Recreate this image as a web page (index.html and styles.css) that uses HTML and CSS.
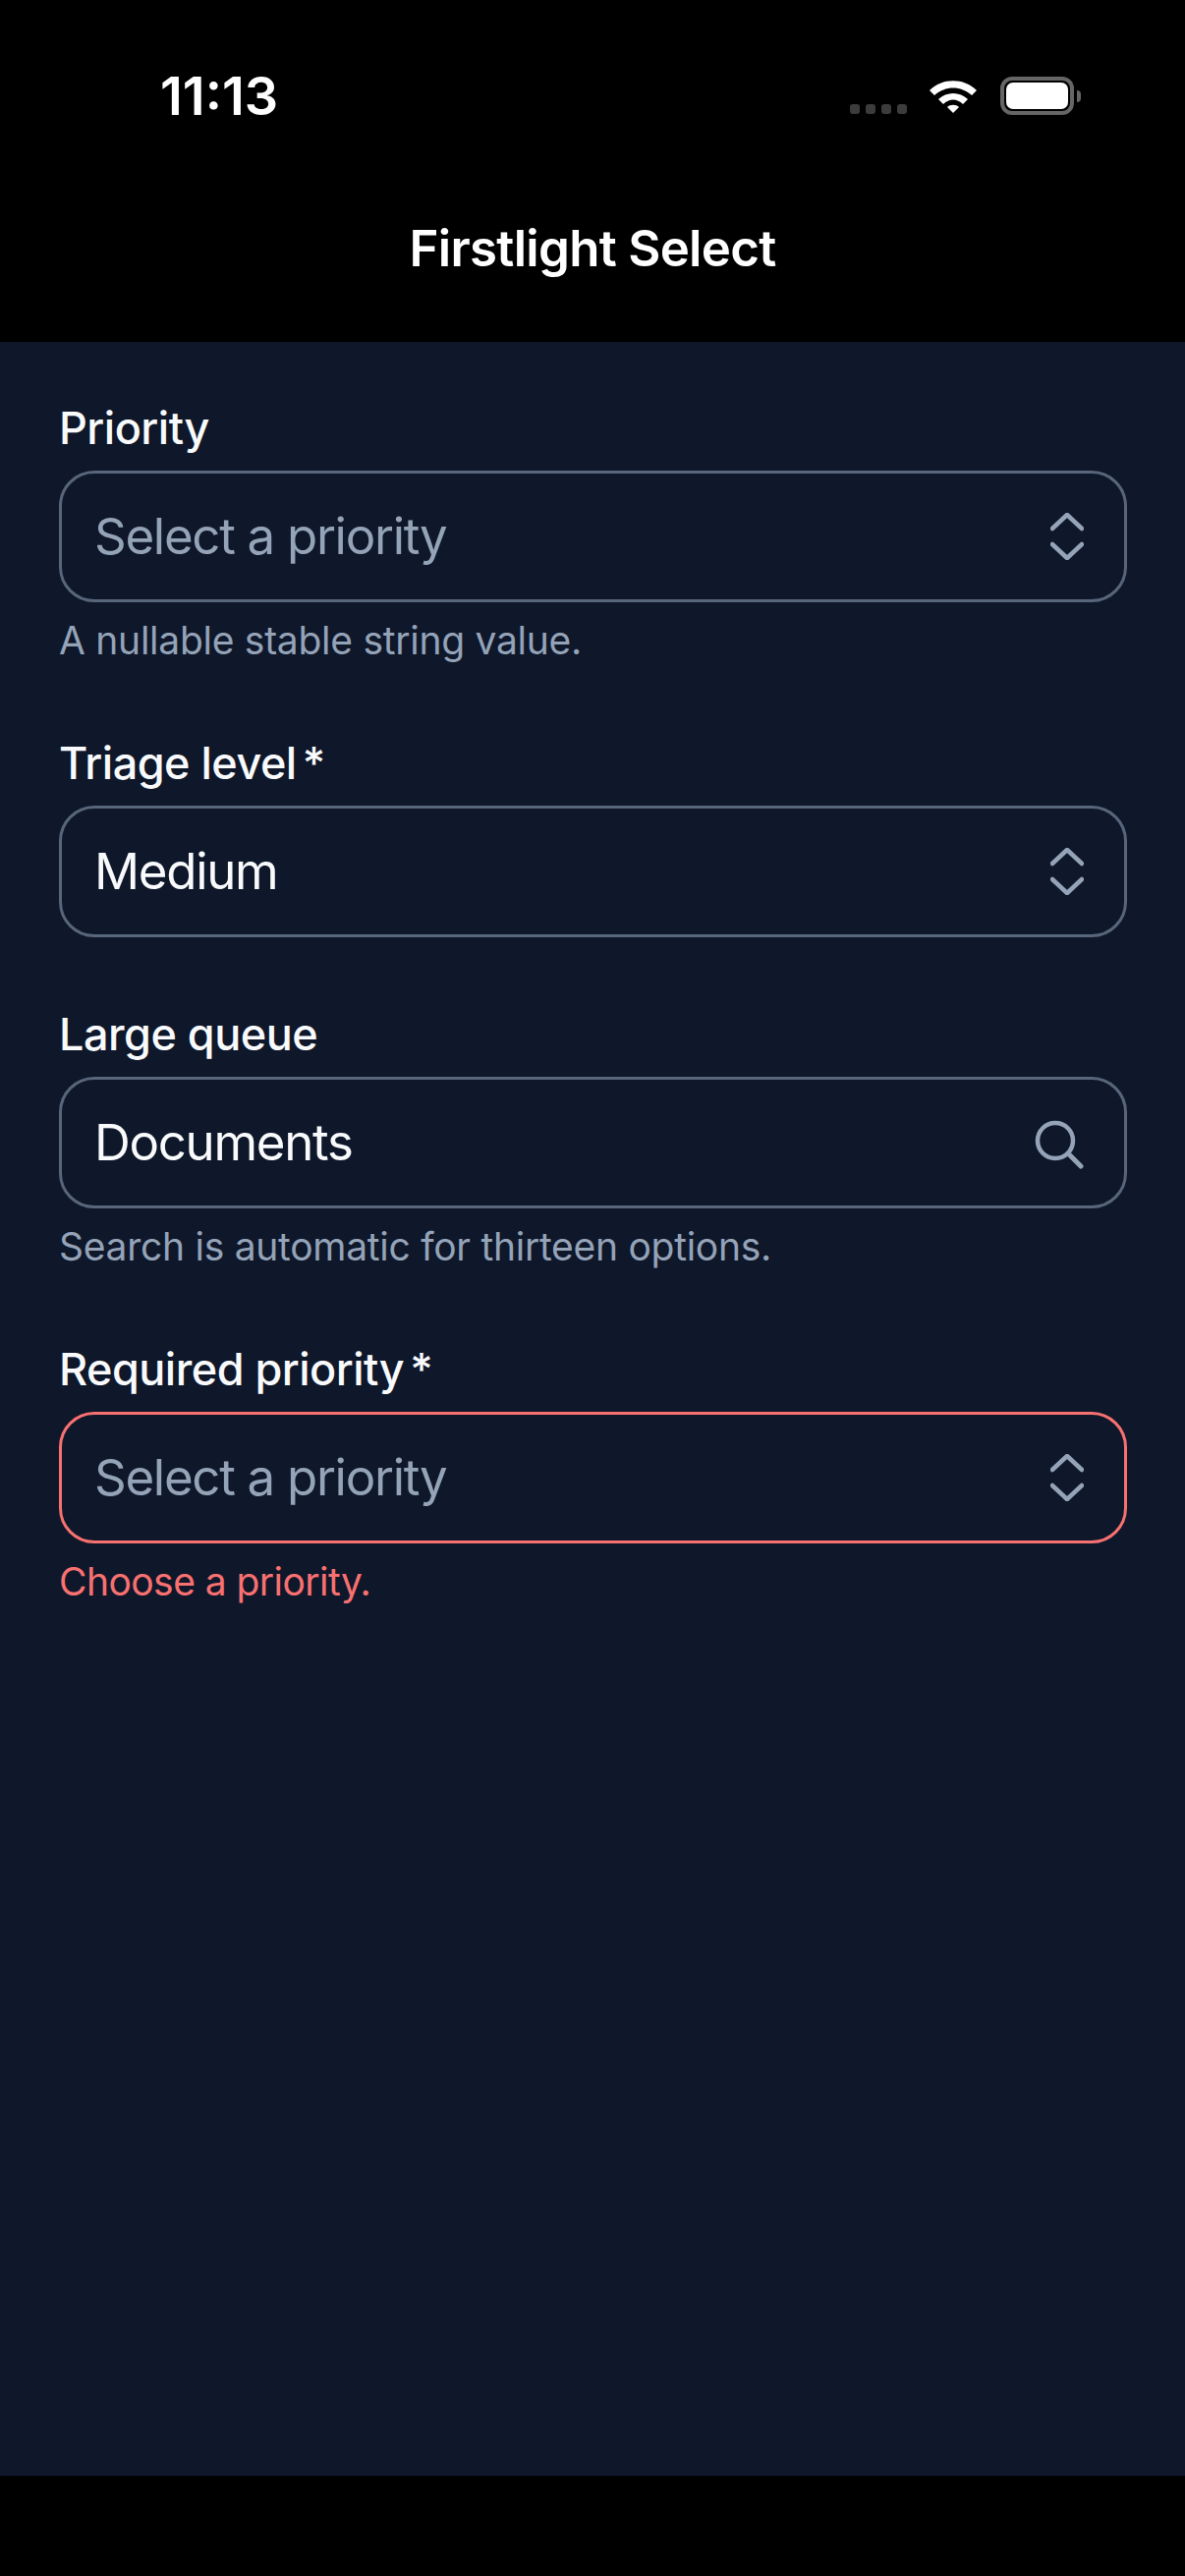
FILE: index.html
```html
<!DOCTYPE html>
<html lang="en">
<head>
  <meta charset="UTF-8">
  <meta name="viewport" content="width=device-width, initial-scale=1.0">
  <title>Firstlight Select</title>
  <link rel="stylesheet" href="styles.css">
</head>
<body>
  <div class="status-bar">
    <span class="time">11:13</span>
    <div class="status-icons">
      <div class="signal">
        <span class="signal-dot"></span>
        <span class="signal-dot"></span>
        <span class="signal-dot"></span>
        <span class="signal-dot"></span>
      </div>
      <svg class="wifi" width="50" height="38" viewBox="0 0 50 38">
        <path d="M1 14 C14 1 36 1 49 14 L44 19 C33 9 17 9 6 19 Z" fill="#fff"/>
        <path d="M10 23 C18 15 32 15 40 23 L35 28 C29 22 21 22 15 28 Z" fill="#fff"/>
        <path d="M19 31 C22 28 28 28 31 31 L25 37 Z" fill="#fff"/>
      </svg>
      <div class="battery">
        <div class="battery-body"><div class="battery-fill"></div></div>
        <div class="battery-cap"></div>
      </div>
    </div>
  </div>

  <header class="nav-bar">
    <h1 class="nav-title">Firstlight Select</h1>
  </header>

  <main class="content">
    <div class="field">
      <label class="field-label">Priority</label>
      <div class="select-box">
        <span class="select-value placeholder">Select a priority</span>
        <svg class="chevrons" width="34" height="48" viewBox="0 0 34 48">
          <path d="M2 16 L17 2 L32 16 M2 32 L17 46 L32 32" fill="none" stroke="#94a3b8" stroke-width="4.5" stroke-linecap="round" stroke-linejoin="round"/>
        </svg>
      </div>
      <p class="field-hint">A nullable stable string value.</p>
    </div>

    <div class="field">
      <label class="field-label">Triage level<span class="required">*</span></label>
      <div class="select-box">
        <span class="select-value">Medium</span>
        <svg class="chevrons" width="34" height="48" viewBox="0 0 34 48">
          <path d="M2 16 L17 2 L32 16 M2 32 L17 46 L32 32" fill="none" stroke="#94a3b8" stroke-width="4.5" stroke-linecap="round" stroke-linejoin="round"/>
        </svg>
      </div>
    </div>

    <div class="field">
      <label class="field-label">Large queue</label>
      <div class="select-box">
        <span class="select-value">Documents</span>
        <svg class="search-icon" width="50" height="50" viewBox="0 0 50 50">
          <circle cx="21" cy="21" r="18" fill="none" stroke="#94a3b8" stroke-width="4.5"/>
          <path d="M34 34 L47 47" fill="none" stroke="#94a3b8" stroke-width="5" stroke-linecap="round"/>
        </svg>
      </div>
      <p class="field-hint">Search is automatic for thirteen options.</p>
    </div>

    <div class="field">
      <label class="field-label">Required priority<span class="required">*</span></label>
      <div class="select-box has-error">
        <span class="select-value placeholder">Select a priority</span>
        <svg class="chevrons" width="34" height="48" viewBox="0 0 34 48">
          <path d="M2 16 L17 2 L32 16 M2 32 L17 46 L32 32" fill="none" stroke="#94a3b8" stroke-width="4.5" stroke-linecap="round" stroke-linejoin="round"/>
        </svg>
      </div>
      <p class="field-hint error-text">Choose a priority.</p>
    </div>
  </main>

  <div class="home-area"></div>
</body>
</html>
```

FILE: styles.css
```css
html, body {
  margin: 0;
  padding: 0;
}

body {
  width: 1206px;
  height: 2622px;
  display: flex;
  flex-direction: column;
  background-color: #000;
  color: #fff;
  font-family: Inter, "Liberation Sans", sans-serif;
}

.status-bar {
  height: 156px;
  display: flex;
  justify-content: space-between;
  box-sizing: border-box;
  padding: 0 106px 0 163px;
}

.time {
  margin-top: 66px;
  font-size: 54px;
  line-height: 64px;
  font-weight: 600;
}

.status-icons {
  display: flex;
  align-items: flex-start;
}

.signal {
  display: flex;
  gap: 6px;
  margin-top: 106px;
  margin-right: 22px;
}

.signal-dot {
  width: 10px;
  height: 10px;
  border-radius: 3px;
  background-color: #3c3c3c;
}

.wifi {
  margin-top: 78px;
  margin-right: 23px;
}

.battery {
  display: flex;
  align-items: center;
  margin-top: 78px;
}

.battery-body {
  width: 75px;
  height: 39px;
  box-sizing: border-box;
  border: 4px solid #666;
  border-radius: 12px;
  padding: 2px;
}

.battery-fill {
  height: 100%;
  background-color: #fff;
  border-radius: 7px;
}

.battery-cap {
  width: 4px;
  height: 12px;
  margin-left: 3px;
  background-color: #666;
  border-radius: 0 4px 4px 0;
}

.nav-bar {
  height: 192px;
  box-sizing: border-box;
  padding-top: 67px;
  text-align: center;
}

.nav-title {
  margin: 0;
  font-size: 51px;
  line-height: 60px;
  font-weight: 600;
  letter-spacing: -0.7px;
}

.content {
  flex: 1;
  background-color: #0f172a;
  padding: 58px 59px 0 60px;
}

.field {
  margin-bottom: 69px;
}

.field-label {
  display: block;
  font-size: 45px;
  line-height: 60px;
  font-weight: 500;
  letter-spacing: -0.5px;
  margin-bottom: 13px;
  color: #f8fafc;
}

.required {
  margin-left: 6px;
}

.select-box {
  height: 134px;
  box-sizing: border-box;
  display: flex;
  align-items: center;
  justify-content: space-between;
  border: 3px solid #58667b;
  border-radius: 36px;
  padding: 0 41px 0 33px;
}

.select-box.has-error {
  border-color: #f87171;
}

.select-value {
  font-size: 51px;
  line-height: 60px;
  letter-spacing: -1.3px;
  color: #f8fafc;
}

.select-value.placeholder {
  color: #94a3b8;
}

.search-icon {
  margin-top: 4px;
}

.field-hint {
  margin: 13px 0 0;
  font-size: 39px;
  line-height: 52px;
  letter-spacing: -0.27px;
  color: #94a3b8;
}

.error-text {
  letter-spacing: -0.55px;
  color: #f87171;
}

.home-area {
  height: 102px;
}
```
